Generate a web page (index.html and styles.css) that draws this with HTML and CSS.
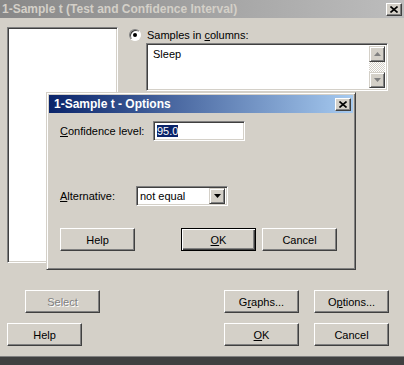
FILE: index.html
```html
<!DOCTYPE html>
<html lang="en">

<head>
    <meta charset="UTF-8">
    <title>1-Sample t</title>
    <link rel="stylesheet" href="styles.css">
</head>

<body>
    <div class="window">
        <div class="titlebar">
            <span class="title">1-Sample t (Test and Confidence Interval)</span>
            <span class="close_btn">
                <svg width="8" height="7" viewBox="0 0 8 7"><path d="M0.5 0.5L7.5 6.5M7.5 0.5L0.5 6.5" stroke="#000" stroke-width="1.6"/></svg>
            </span>
        </div>

        <div class="top">
            <div class="listbox sunken"></div>
            <div class="samples">
                <div class="radio_row">
                    <span class="radio"><span class="dot"></span></span>
                    <span>Samples in <u>c</u>olumns:</span>
                </div>
                <div class="field sunken">
                    <span class="field_text">Sleep</span>
                    <div class="scrollbar">
                        <span class="scroll_btn">
                            <svg width="7" height="4" viewBox="0 0 7 4"><path d="M3.5 0L7 4H0z" fill="#808080"/></svg>
                        </span>
                        <span class="scroll_track"></span>
                        <span class="scroll_btn">
                            <svg width="7" height="4" viewBox="0 0 7 4"><path d="M0 0H7L3.5 4z" fill="#808080"/></svg>
                        </span>
                    </div>
                </div>
            </div>
        </div>

        <div class="btn_row row_one">
            <button class="btn disabled">Select</button>
            <div class="btn_group">
                <button class="btn">G<u>r</u>aphs...</button>
                <button class="btn">O<u>p</u>tions...</button>
            </div>
        </div>
        <div class="btn_row row_two">
            <button class="btn">Help</button>
            <div class="btn_group">
                <button class="btn"><u>O</u>K</button>
                <button class="btn">Cancel</button>
            </div>
        </div>

        <!-- options dialog sits over the main window -->
        <div class="options">
            <div class="opt_title">
                <span>1-Sample t - Options</span>
                <span class="close_btn">
                    <svg width="8" height="7" viewBox="0 0 8 7"><path d="M0.5 0.5L7.5 6.5M7.5 0.5L0.5 6.5" stroke="#000" stroke-width="1.6"/></svg>
                </span>
            </div>
            <div class="opt_body">
                <div class="opt_row">
                    <span class="lbl_conf"><u>C</u>onfidence level:</span>
                    <div class="opt_input sunken"><span class="selected">95.0</span></div>
                </div>
                <div class="opt_row alt_row">
                    <span class="lbl_alt"><u>A</u>lternative:</span>
                    <div class="combo sunken">
                        <span>not equal</span>
                        <span class="combo_btn">
                            <svg width="7" height="4" viewBox="0 0 7 4"><path d="M0 0H7L3.5 4z" fill="#000"/></svg>
                        </span>
                    </div>
                </div>
                <div class="opt_buttons">
                    <button class="btn">Help</button>
                    <button class="btn default"><u>O</u>K</button>
                    <button class="btn">Cancel</button>
                </div>
            </div>
        </div>
    </div>
</body>

</html>
```

FILE: styles.css
```css
* {
    margin: 0px;
    padding: 0px;
    box-sizing: border-box;
}

body {
    background-color: #404040;
    font-family: "Liberation Sans", Arial, sans-serif;
    font-size: 11px;
    color: #000;
}

u {
    text-decoration: underline;
}

.window {
    position: relative;
    width: 404px;
    height: 357px;
    background-color: #d4d0c8;
    border-bottom: 1px solid #808080;
}

.titlebar {
    display: flex;
    align-items: center;
    justify-content: space-between;
    height: 18px;
    padding: 0 2px 0 2px;
    background: linear-gradient(to right, #888888, #bdbdbd);
}

.titlebar .title {
    color: #d4d0c8;
    font-weight: bold;
    font-size: 12px;
}

.close_btn {
    display: flex;
    align-items: center;
    justify-content: center;
    width: 16px;
    height: 13px;
    background-color: #d4d0c8;
    border: 1px solid;
    border-color: #fff #404040 #404040 #fff;
    box-shadow: inset -1px -1px #808080;
}

.sunken {
    background-color: #fff;
    border: 1px solid;
    border-color: #808080 #fff #fff #808080;
    box-shadow: inset 1px 1px #404040, inset -1px -1px #d4d0c8;
}

.top {
    display: flex;
    padding: 9px 0 0 7px;
}

.listbox {
    width: 111px;
    height: 236px;
}

.samples {
    margin-left: 11px;
}

.radio_row {
    display: flex;
    align-items: center;
    gap: 6px;
    height: 13px;
    margin-top: 1px;
}

.radio {
    display: flex;
    align-items: center;
    justify-content: center;
    width: 12px;
    height: 12px;
    border-radius: 50%;
    background-color: #fff;
    border: 1px solid;
    border-color: #808080 #fff #fff #808080;
    box-shadow: inset 1px 1px #404040;
}

.radio .dot {
    width: 4px;
    height: 4px;
    border-radius: 50%;
    background-color: #000;
}

.field {
    display: flex;
    justify-content: space-between;
    width: 242px;
    height: 48px;
    margin: 2px 0 0 17px;
    padding: 2px;
}

.field_text {
    padding: 2px 0 0 4px;
}

.scrollbar {
    display: flex;
    flex-direction: column;
    width: 16px;
}

.scroll_btn,
.combo_btn {
    display: flex;
    align-items: center;
    justify-content: center;
    width: 16px;
    height: 16px;
    background-color: #d4d0c8;
    border: 1px solid;
    border-color: #d4d0c8 #404040 #404040 #d4d0c8;
    box-shadow: inset 1px 1px #fff, inset -1px -1px #808080;
}

.scroll_track {
    flex: 1;
    background: repeating-conic-gradient(#d4d0c8 0 25%, #fff 0 50%) 0 0 / 2px 2px;
}

.btn {
    display: flex;
    align-items: center;
    justify-content: center;
    width: 75px;
    height: 23px;
    background-color: #d4d0c8;
    border: 1px solid;
    border-color: #fff #404040 #404040 #fff;
    box-shadow: inset -1px -1px #808080;
    font: inherit;
    color: #000;
}

.btn.default {
    border-color: #000;
    box-shadow: inset 1px 1px #fff, inset -1px -1px #404040, inset -2px -2px #808080;
}

.btn.disabled {
    color: #808080;
    text-shadow: 1px 1px #fff;
}

.btn_row {
    display: flex;
    padding-right: 15px;
}

.btn_group {
    display: flex;
    gap: 15px;
    margin-left: auto;
}

.row_one {
    margin-top: 27px;
    padding-left: 25px;
}

.row_two {
    margin-top: 10px;
    padding-left: 7px;
}

.options {
    position: absolute;
    top: 92px;
    left: 46px;
    width: 310px;
    height: 178px;
    padding: 2px;
    background-color: #d4d0c8;
    border: 1px solid;
    border-color: #d4d0c8 #404040 #404040 #d4d0c8;
    box-shadow: inset 1px 1px #fff, inset -1px -1px #808080;
}

.opt_title {
    display: flex;
    align-items: center;
    justify-content: space-between;
    height: 18px;
    padding: 0 2px 0 5px;
    background: linear-gradient(to right, #0a246a, #a6caf0);
    color: #fff;
    font-weight: bold;
    font-size: 12px;
}

.opt_body {
    padding: 8px 0 0 11px;
}

.opt_row {
    display: flex;
    align-items: center;
}

.lbl_conf {
    width: 93px;
}

.lbl_alt {
    width: 76px;
}

.opt_input {
    width: 92px;
    height: 20px;
    padding: 3px 0 0 3px;
}

.selected {
    background-color: #0a246a;
    color: #fff;
}

.alt_row {
    margin-top: 45px;
}

.combo {
    display: flex;
    align-items: center;
    justify-content: space-between;
    width: 92px;
    height: 20px;
    padding: 2px;
}

.combo span:first-child {
    padding-left: 1px;
}

.opt_buttons {
    display: flex;
    margin-top: 22px;
}

.opt_buttons .default {
    margin-left: 46px;
}

.opt_buttons .default + .btn {
    margin-left: 6px;
}
```
